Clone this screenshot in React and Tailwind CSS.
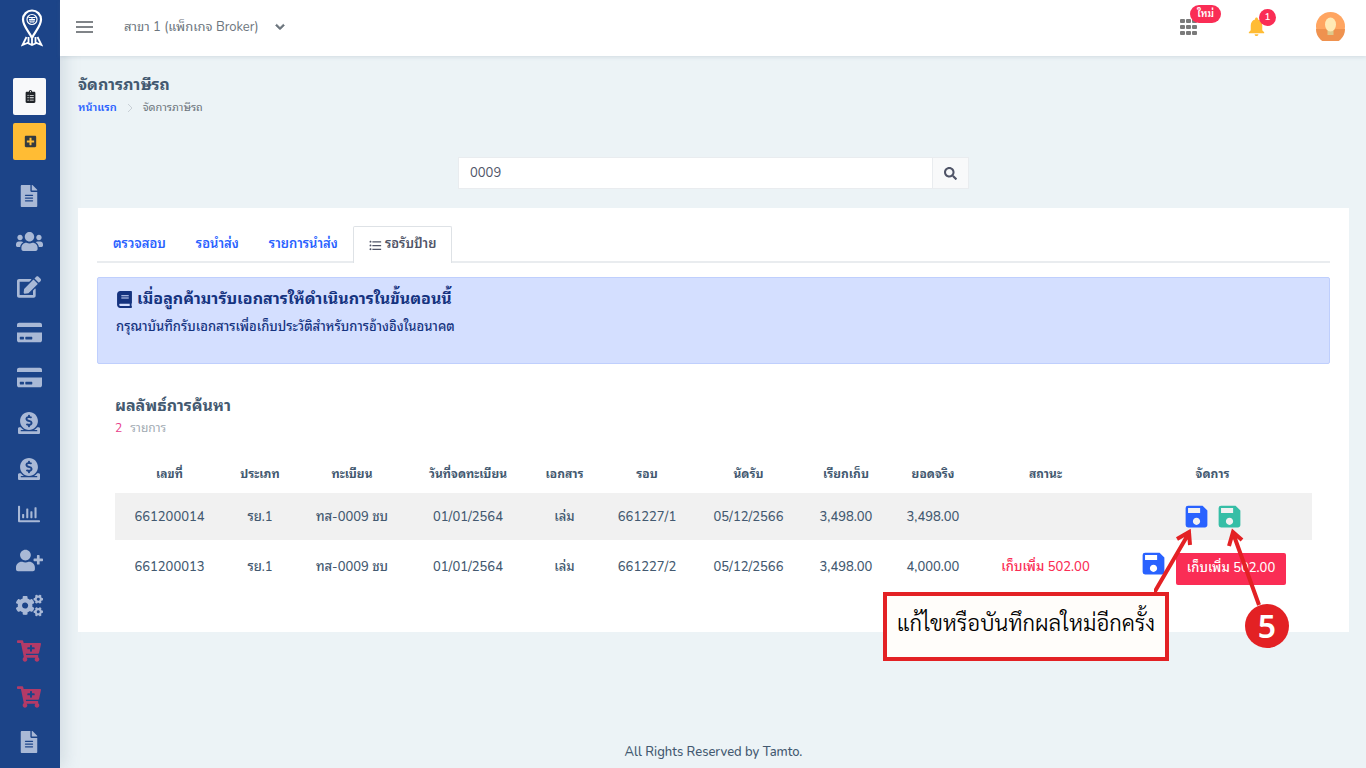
import { useState } from "react";
import {
  FaBook,
  FaCartPlus,
  FaChevronDown,
  FaClipboardList,
  FaCogs,
  FaCreditCard,
  FaDonate,
  FaEdit,
  FaFileAlt,
  FaPlusSquare,
  FaRegChartBar,
  FaSearch,
  FaUserPlus,
  FaUsers,
} from "react-icons/fa";
import { MdFormatListBulleted, MdNotifications, MdSave } from "react-icons/md";

const menuItems = [
  { label: "เอกสาร", icon: FaFileAlt, size: 22 },
  { label: "ลูกค้า", icon: FaUsers, size: 27 },
  { label: "แก้ไข", icon: FaEdit, size: 24 },
  { label: "ชำระเงิน", icon: FaCreditCard, size: 25 },
  { label: "บัตร", icon: FaCreditCard, size: 25 },
  { label: "รายรับ", icon: FaDonate, size: 22 },
  { label: "รายจ่าย", icon: FaDonate, size: 22 },
  { label: "รายงาน", icon: FaRegChartBar, size: 22 },
  { label: "เพิ่มผู้ใช้", icon: FaUserPlus, size: 27 },
  { label: "ตั้งค่า", icon: FaCogs, size: 27 },
  { label: "สั่งซื้อ", icon: FaCartPlus, size: 24, danger: true },
  { label: "ตะกร้า", icon: FaCartPlus, size: 24, danger: true },
  { label: "บันทึก", icon: FaFileAlt, size: 22 },
];

const tabs = ["ตรวจสอบ", "รอนำส่ง", "รายการนำส่ง", "รอรับป้าย"];

const columns = [
  { title: "เลขที่", width: "w-[109px]" },
  { title: "ประเภท", width: "w-[72px]" },
  { title: "ทะเบียน", width: "w-[112px]" },
  { title: "วันที่จดทะเบียน", width: "w-[120px]" },
  { title: "เอกสาร", width: "w-[73px]" },
  { title: "รอบ", width: "w-[92px]" },
  { title: "นัดรับ", width: "w-[111px]" },
  { title: "เรียกเก็บ", width: "w-[84px]" },
  { title: "ยอดจริง", width: "w-[90px]" },
  { title: "สถานะ", width: "w-[135px]" },
  { title: "จัดการ", width: "w-[199px]" },
];

const rows = [
  {
    cells: ["661200014", "รย.1", "ทส-0009 ชบ", "01/01/2564", "เล่ม", "661227/1", "05/12/2566", "3,498.00", "3,498.00"],
    extra: "",
  },
  {
    cells: ["661200013", "รย.1", "ทส-0009 ชบ", "01/01/2564", "เล่ม", "661227/2", "05/12/2566", "3,498.00", "4,000.00"],
    extra: "เก็บเพิ่ม 502.00",
  },
];

const Logo = () => (
  <svg width="22" height="38" viewBox="0 0 22 38" fill="none" stroke="#fff" aria-hidden="true">
    <path d="M11 29C8 22.500 2 17 2 10.500a9 9 0 0 1 18 0C20 17 14 22.500 11 29Z" strokeWidth="2.200" />
    <circle cx="11" cy="10.500" r="5" strokeWidth="1.200" />
    <path d="M7.500 8.500h7M8 10.500h6M9 10.500v2.500h4v-2.500M11 8.500v4" strokeWidth="1" />
    <path d="M5.500 28 1.500 36l5-2 4.500 2 4.500-2 5 2-4-8M7.500 28v6M14.500 28v6M11 30v5" strokeWidth="1.800" />
  </svg>
);

const Sidebar = () => (
  <aside className="flex w-[60px] shrink-0 flex-col items-center bg-[#1c4488] pr-[2px] shadow-[4px_0_16px_rgba(100,120,140,0.2)]">
    <a href="#home" aria-label="Tamto" className="flex h-14 items-center pl-[6px]">
      <Logo />
    </a>
    <div className="mt-[22px] flex flex-col gap-2">
      <button aria-label="รายการ" className="flex h-[37px] w-[33px] items-center justify-center rounded-xs bg-[#f8f9fa] pl-[2px] text-[#212529]">
        <FaClipboardList size={13} />
      </button>
      <button aria-label="เพิ่ม" className="flex h-[37px] w-[33px] items-center justify-center rounded-xs bg-[#ffbc34] pl-[2px] text-[#343a40]">
        <FaPlusSquare size={13} />
      </button>
    </div>
    <nav className="mt-[13px] flex flex-1 flex-col pb-[3px]">
      {menuItems.map(({ label, icon: Icon, size, danger }) => (
        <a
          key={label}
          href="#menu"
          aria-label={label}
          className={`flex flex-1 items-center justify-center ${danger ? "text-[#b33a67]" : "text-[#a9b9d6]"}`}
        >
          <Icon size={size} />
        </a>
      ))}
    </nav>
  </aside>
);

const Header = () => (
  <header className="flex h-14 items-center bg-white pr-[21px] pb-[3px] pl-4 text-[#6c757d] shadow-[0_1px_4px_rgba(100,120,140,0.2)]">
    <button aria-label="เมนู" className="flex w-[17px] flex-col gap-[3px]">
      <span className="h-[2px] bg-[#808488]" />
      <span className="h-[2px] bg-[#808488]" />
      <span className="h-[2px] bg-[#808488]" />
    </button>
    <label className="ml-[31px] flex items-center gap-4 text-[13px]">
      <select aria-label="สาขา" className="appearance-none bg-transparent pt-[2px]">
        <option>สาขา 1 (แพ็กเกจ Broker)</option>
      </select>
      <FaChevronDown size={10} stroke="currentColor" strokeWidth={40} />
    </label>
    <div className="ml-auto flex items-center">
      <button aria-label="แอป" className="relative">
        <svg width="18" height="16" viewBox="0 0 18 16" fill="#7a7a7a">
          {[0, 6, 12].map((x) =>
            [0, 6, 12].map((y) => <rect key={`${x}-${y}`} x={x} y={y} width="5" height="4" rx="1" />)
          )}
        </svg>
        <span className="absolute -top-[14px] left-[10px] h-[18px] rounded-full bg-[#fa2d55] px-[7px] text-[10px] leading-[18px] font-semibold whitespace-nowrap text-white">
          ใหม่
        </span>
      </button>
      <button aria-label="แจ้งเตือน" className="relative ml-[47px] text-[#ffbc34]">
        <MdNotifications size={23} />
        <span className="absolute -top-[6px] left-[14px] size-[17px] rounded-full bg-[#fa2d55] text-[10px] leading-[17px] font-semibold text-white">
          1
        </span>
      </button>
      <button aria-label="บัญชีผู้ใช้" className="ml-[48px]">
        <svg width="29" height="29" viewBox="0 0 29 29">
          <circle cx="14.500" cy="14.500" r="14.500" fill="#ffa561" />
          <path d="M0 17h29a14.500 14.500 0 0 1-29 0Z" fill="#ef924f" />
          <rect x="11.500" y="17" width="6" height="6" fill="#dfc98c" />
          <ellipse cx="14.500" cy="12.500" rx="5.500" ry="7" fill="#ffe9b5" />
        </svg>
      </button>
    </div>
  </header>
);

// กล่องคำอธิบายและลูกศรที่วางทับตาราง
const Annotation = () => (
  <>
    <svg className="pointer-events-none absolute top-[316px] right-[70px]" width="125" height="90" viewBox="0 0 125 90" fill="none" stroke="#e32124" strokeWidth="4">
      <path d="M0 69 35 9M23 15 35 8l1 13" />
      <path d="M105 81 79 9M75 22 79 8l9 8" />
    </svg>
    <p className="absolute top-[384px] right-[180px] h-[69px] w-[286px] border-4 border-[#e32124] bg-[#fffdfa] pt-[6px] text-center font-['Sarabun','Noto_Sans',sans-serif] text-[22px] leading-[40px] font-light whitespace-nowrap text-black">
      แก้ไขหรือบันทึกผลใหม่อีกครั้ง
    </p>
    <span className="absolute top-[396px] right-[60px] size-11 rounded-full bg-[#e32124] text-center font-['Noto_Sans',sans-serif] text-[32px] leading-[44px] font-semibold text-white">
      5
    </span>
  </>
);

const App = () => {
  const [keyword, setKeyword] = useState("0009");
  const [activeTab, setActiveTab] = useState(3);

  return (
    <div className="flex min-h-screen bg-[#ecf3f6] font-['Nunito','Noto_Sans_Thai_Looped','Noto_Sans',sans-serif] text-[13px] text-[#435970]">
      <Sidebar />

      <div className="flex min-w-0 flex-1 flex-col">
        <Header />

        <main className="flex flex-1 flex-col pr-[17px] pl-[18px]">
          <h1 className="mt-[17px] text-base leading-6 font-bold">จัดการภาษีรถ</h1>
          <nav className="flex items-center gap-[10px] text-[11px] leading-[22px]">
            <a href="#home" className="font-semibold text-[#2962ff]">หน้าแรก</a>
            <svg width="6" height="10" viewBox="0 0 6 10" fill="none" stroke="#c9d0d6">
              <path d="m1 1 4 4-4 4" />
            </svg>
            <span className="text-[#6c757d]">จัดการภาษีรถ</span>
          </nav>

          {/* Search */}
          <form className="mx-auto mt-[38px] flex h-8 w-full max-w-[511px] border border-[#e9ecef]" onSubmit={(e) => e.preventDefault()}>
            <input
              type="text"
              aria-label="ค้นหา"
              value={keyword}
              onChange={(e) => setKeyword(e.target.value)}
              className="min-w-0 flex-1 bg-white px-[11px] pt-[2px] text-[13px] text-[#4f5467] outline-none"
            />
            <button type="submit" aria-label="ค้นหา" className="flex w-9 items-center justify-center border-l border-[#e9ecef] bg-[#f8f9fa] text-[#4f5467]">
              <FaSearch size={13} />
            </button>
          </form>

          <section className="relative mt-[19px] h-[424px] bg-white px-[19px] pt-[18px]">
            {/* Tabs */}
            <div className="flex h-[37px] border-b-2 border-[#e9ecef] text-[13px] font-semibold" role="tablist">
              {tabs.map((tab, index) => (
                <button
                  key={tab}
                  role="tab"
                  aria-selected={activeTab === index}
                  onClick={() => setActiveTab(index)}
                  className={
                    activeTab === index
                      ? "flex h-[37px] items-center gap-[2px] rounded-t-xs border border-b-0 border-[#dee2e6] bg-white px-[14px] text-[#4f5467]"
                      : "h-9 px-[15px] pt-[2px] text-[#2962ff] first:pl-4"
                  }
                >
                  {index === 3 && <MdFormatListBulleted size={15} />}
                  {tab}
                </button>
              ))}
            </div>

            <div className="mt-[14px] h-[87px] rounded-xs border border-[#bfcffd] bg-[#d4dfff] px-[18px] pt-[9px] text-[#15337f]">
              <h2 className="flex items-center gap-1 text-base leading-6 font-bold">
                <FaBook size={17} />
                เมื่อลูกค้ามารับเอกสารให้ดำเนินการในขั้นตอนนี้
              </h2>
              <p className="mt-1 text-[13px] leading-6 font-medium">กรุณาบันทึกรับเอกสารเพื่อเก็บประวัติสำหรับการอ้างอิงในอนาคต</p>
            </div>

            <div className="px-[18px] pt-[30px]">
              <h2 className="text-base leading-6 font-bold">ผลลัพธ์การค้นหา</h2>
              <p className="text-xs leading-5 text-[#a1aab2]">
                <span className="mr-2 text-[#e83e8c]">2</span>รายการ
              </p>

              <table className="mt-4 w-full table-fixed text-center">
                <thead>
                  <tr className="h-[39px] text-xs">
                    {columns.map((col) => (
                      <th key={col.title} className={`${col.width} font-bold whitespace-nowrap`}>{col.title}</th>
                    ))}
                  </tr>
                </thead>
                <tbody>
                  {rows.map((row) => (
                    <tr key={row.cells[0]} className="h-[47px] odd:bg-[#f1f1f1] even:h-[54px]">
                      {row.cells.map((cell, i) => (
                        <td key={i} className="pt-[2px] font-medium whitespace-nowrap">{cell}</td>
                      ))}
                      <td className="pt-[2px] font-medium whitespace-nowrap text-[#fa2d55]">{row.extra}</td>
                      <td>
                        <div className="flex items-start justify-center gap-1">
                          <button aria-label="แก้ไขผล" className="text-[#2962ff]">
                            <MdSave size={29} />
                          </button>
                          {row.extra ? (
                            <button className="mt-1 ml-1 h-8 rounded-xs bg-[#fa2d55] px-[11px] font-medium whitespace-nowrap text-white">{row.extra}</button>
                          ) : (
                            <button aria-label="บันทึกผล" className="text-[#36bea6]">
                              <MdSave size={29} />
                            </button>
                          )}
                        </div>
                      </td>
                    </tr>
                  ))}
                </tbody>
              </table>
            </div>

            <Annotation />
          </section>

          <footer className="mt-auto pb-[7px] text-center leading-[18px] font-medium">All Rights Reserved by Tamto.</footer>
        </main>
      </div>
    </div>
  );
};

export default App;
